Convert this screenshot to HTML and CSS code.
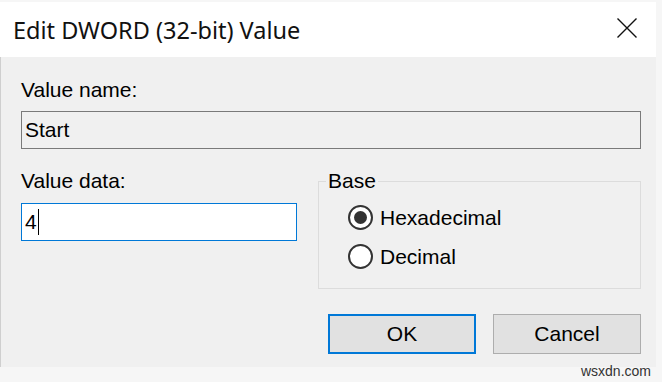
FILE: index.html
```html
<!DOCTYPE html>
<html lang="en">
    <head>
        <meta charset="UTF-8">
        <meta name="viewport" content="width=device-width, initial-scale=1.0">
        <title>Edit DWORD (32-bit) Value</title>
        <link rel="stylesheet" href="styles.css">
    </head>
    <body>
        <div class="desk">
            <div class="window">
                <header class="titlebar">
                    <span class="title">Edit DWORD (32-bit) Value</span>
                    <button class="close" aria-label="Close">
                        <svg width="20" height="20" viewBox="0 0 20 20">
                            <path d="M0.5 0.5 L19.5 19.5 M19.5 0.5 L0.5 19.5" stroke="#111" stroke-width="1.4" fill="none"/>
                        </svg>
                    </button>
                </header>

                <div class="content">
                    <label class="lbl">Value name:</label>
                    <div class="field readonly">Start</div>

                    <div class="middle">
                        <div class="data-col">
                            <label class="lbl">Value data:</label>
                            <div class="field active">4<span class="caret"></span></div>
                        </div>

                        <fieldset class="base">
                            <legend>Base</legend>
                            <div class="radio"><span class="dot checked"></span>Hexadecimal</div>
                            <div class="radio"><span class="dot"></span>Decimal</div>
                        </fieldset>
                    </div>

                    <div class="buttons">
                        <button class="btn default">OK</button>
                        <button class="btn">Cancel</button>
                    </div>
                </div>
            </div>
            <div class="watermark">wsxdn.com</div>
        </div>
    </body>
</html>
```

FILE: styles.css
```css
body {
    margin: 0;
    padding: 0;
    background-color: #f6f6f6;
    font-family: "Liberation Sans", Arial, sans-serif;
    color: #000;
}

.desk {
    position: relative;
    height: 382px;
    overflow: hidden;
}

.window {
    margin-top: 2px;
    width: 656px;
    height: 365px;
    background-color: #f0f0f0;
    display: flex;
    flex-direction: column;
}

.titlebar {
    height: 55px;
    flex-shrink: 0;
    background-color: #fff;
    display: flex;
    align-items: center;
    justify-content: space-between;
    padding: 0 19px 0 13px;
}

.title {
    font-family: "Noto Sans", "Open Sans", sans-serif;
    font-size: 23.5px;
    color: #111;
    margin-top: 1px;
}

.close {
    border: none;
    background: none;
    padding: 0;
    width: 20px;
    height: 20px;
    margin-top: -3px;
    display: flex;
}

.content {
    flex: 1;
    border-left: 1px solid #cfcfcf;
    padding: 21px 15px 0 20px;
    display: flex;
    flex-direction: column;
}

.lbl {
    display: block;
    font-size: 21px;
    line-height: 24px;
}

.field {
    box-sizing: border-box;
    height: 38px;
    border: 1px solid #7a7a7a;
    font-size: 21px;
    line-height: 34px;
    padding: 0 3px;
    display: flex;
    align-items: center;
}

.field.readonly {
    margin-top: 9px;
    background-color: #f0f0f0;
}

.middle {
    display: flex;
    gap: 21px;
    margin-top: 20px;
}

.data-col {
    width: 276px;
}

.field.active {
    margin-top: 10px;
    background-color: #fff;
    border-color: #0078d7;
}

.caret {
    display: inline-block;
    width: 1px;
    height: 26px;
    background-color: #000;
    margin-left: 1px;
}

.base {
    flex: 1;
    margin: 0;
    border: 1px solid #dcdcdc;
    padding: 5px 0 10px 29px;
    height: 120px;
    box-sizing: border-box;
}

.base legend {
    font-size: 21px;
    line-height: 24px;
    padding: 0 2px;
    margin-left: -22px;
}

.radio {
    display: flex;
    align-items: center;
    gap: 7px;
    font-size: 21px;
    height: 39px;
}

.dot {
    box-sizing: border-box;
    width: 25px;
    height: 25px;
    border: 2px solid #333;
    border-radius: 50%;
    background-color: #fff;
    display: flex;
    align-items: center;
    justify-content: center;
}

.dot.checked::after {
    content: "";
    width: 13px;
    height: 13px;
    border-radius: 50%;
    background-color: #333;
}

.buttons {
    display: flex;
    justify-content: flex-end;
    gap: 17px;
    margin-top: 25px;
}

.btn {
    box-sizing: border-box;
    width: 148px;
    height: 40px;
    background-color: #e1e1e1;
    border: 1px solid #adadad;
    font-family: "Liberation Sans", Arial, sans-serif;
    font-size: 21px;
    color: #000;
    padding: 0;
}

.btn.default {
    border: 2px solid #0078d7;
}

.watermark {
    position: absolute;
    right: 11px;
    top: 363px;
    font-size: 14px;
    color: #333;
}
```
